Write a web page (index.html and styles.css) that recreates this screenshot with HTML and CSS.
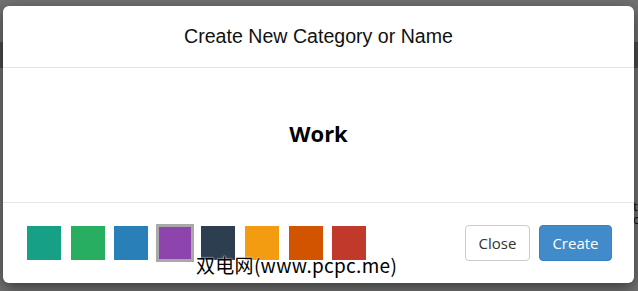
FILE: index.html
```html
<!DOCTYPE html><html lang="en">
<head>
  <meta charset="UTF-8">
  <title>Create New Category or Name</title>
  <link rel="stylesheet" href="styles.css">
</head>
<body>
  <div class="page">
    <div class="page-top"></div>
    <div class="page-nav"></div>
    <div class="page-content">
      <p>t</p>
      <p>o</p>
    </div>
  </div>
  <div class="backdrop"></div>
  <div class="modal">
    <div class="modal-dialog">
      <div class="modal-header">
        <h4 class="modal-title">Create New Category or Name</h4>
      </div>
      <div class="modal-body">
        <span class="cat-name">Work</span>
      </div>
      <div class="modal-footer">
        <div class="swatches">
          <span class="swatch" style="background:#16a085"></span>
          <span class="swatch" style="background:#27ae60"></span>
          <span class="swatch" style="background:#2980b9"></span>
          <span class="swatch selected" style="background:#8e44ad"></span>
          <span class="swatch" style="background:#2c3e50"></span>
          <span class="swatch" style="background:#f39c12"></span>
          <span class="swatch" style="background:#d35400"></span>
          <span class="swatch" style="background:#c0392b"></span>
        </div>
        <div class="actions">
          <button class="btn btn-default">Close</button>
          <button class="btn btn-primary">Create</button>
        </div>
      </div>
    </div>
  </div>
  <div class="watermark">双电网(www.pcpc.me)</div>
</body>
</html>
```

FILE: styles.css
```css
* { box-sizing: border-box; }
html, body { margin: 0; width: 638px; height: 291px; overflow: hidden; font-family: 'Open Sans', sans-serif; }
body { position: relative; background: #e6e6e6; }

.page-top { height: 42px; background: #e2e2e2; }
.page-nav { height: 26px; background: #9a9a9a; }
.page-content { padding: 132px 0 0 633px; font-size: 13px; line-height: 13px; color: #222; }
.page-content p { margin: 0; }

.backdrop { position: absolute; inset: 0; background: rgba(0,0,0,0.5); }

.modal { position: absolute; inset: 0; }
.modal-dialog { margin: 6px 4px 0 3px; height: 277px; background: #fff; border-radius: 6px; box-shadow: 0 5px 15px rgba(0,0,0,0.5); display: flex; flex-direction: column; overflow: hidden; }
.modal-header { height: 62px; border-bottom: 1px solid #e5e5e5; display: flex; align-items: center; justify-content: center; }
.modal-title { margin: 0; font-family: 'Liberation Sans', Arial, sans-serif; font-weight: normal; font-size: 19.6px; color: #111; }
.modal-body { height: 135px; padding-bottom: 4px; border-bottom: 1px solid #e5e5e5; display: flex; align-items: center; justify-content: center; }
.cat-name { font-weight: bold; font-size: 22px; color: #000; }
.modal-footer { flex: 1; display: flex; align-items: center; justify-content: space-between; padding: 0 22px 0 24px; }

.swatches { display: flex; align-items: center; gap: 9.6px; }
.swatch { display: block; width: 34px; height: 34px; }
.swatch.selected { width: 38px; height: 38px; margin: 0 -2px; border: 3px solid #a9a9a9; }

.actions { display: flex; gap: 9px; }
.btn { font-family: 'Open Sans', sans-serif; font-size: 15px; line-height: 18px; padding: 8px 12.5px; border: 1px solid; border-radius: 4px; cursor: pointer; }
.btn-default { background: #fff; border-color: #ccc; color: #333; }
.btn-primary { background: #428bca; border-color: #3a81c0; color: #fff; }

.watermark { position: absolute; left: 196px; top: 252px; font-family: 'Noto Sans CJK SC', sans-serif; font-size: 19px; font-weight: 400; line-height: 26px; color: #000; letter-spacing: 0.3px; text-shadow: 0 0 2px #fff, 0 0 1px #fff; }
```
